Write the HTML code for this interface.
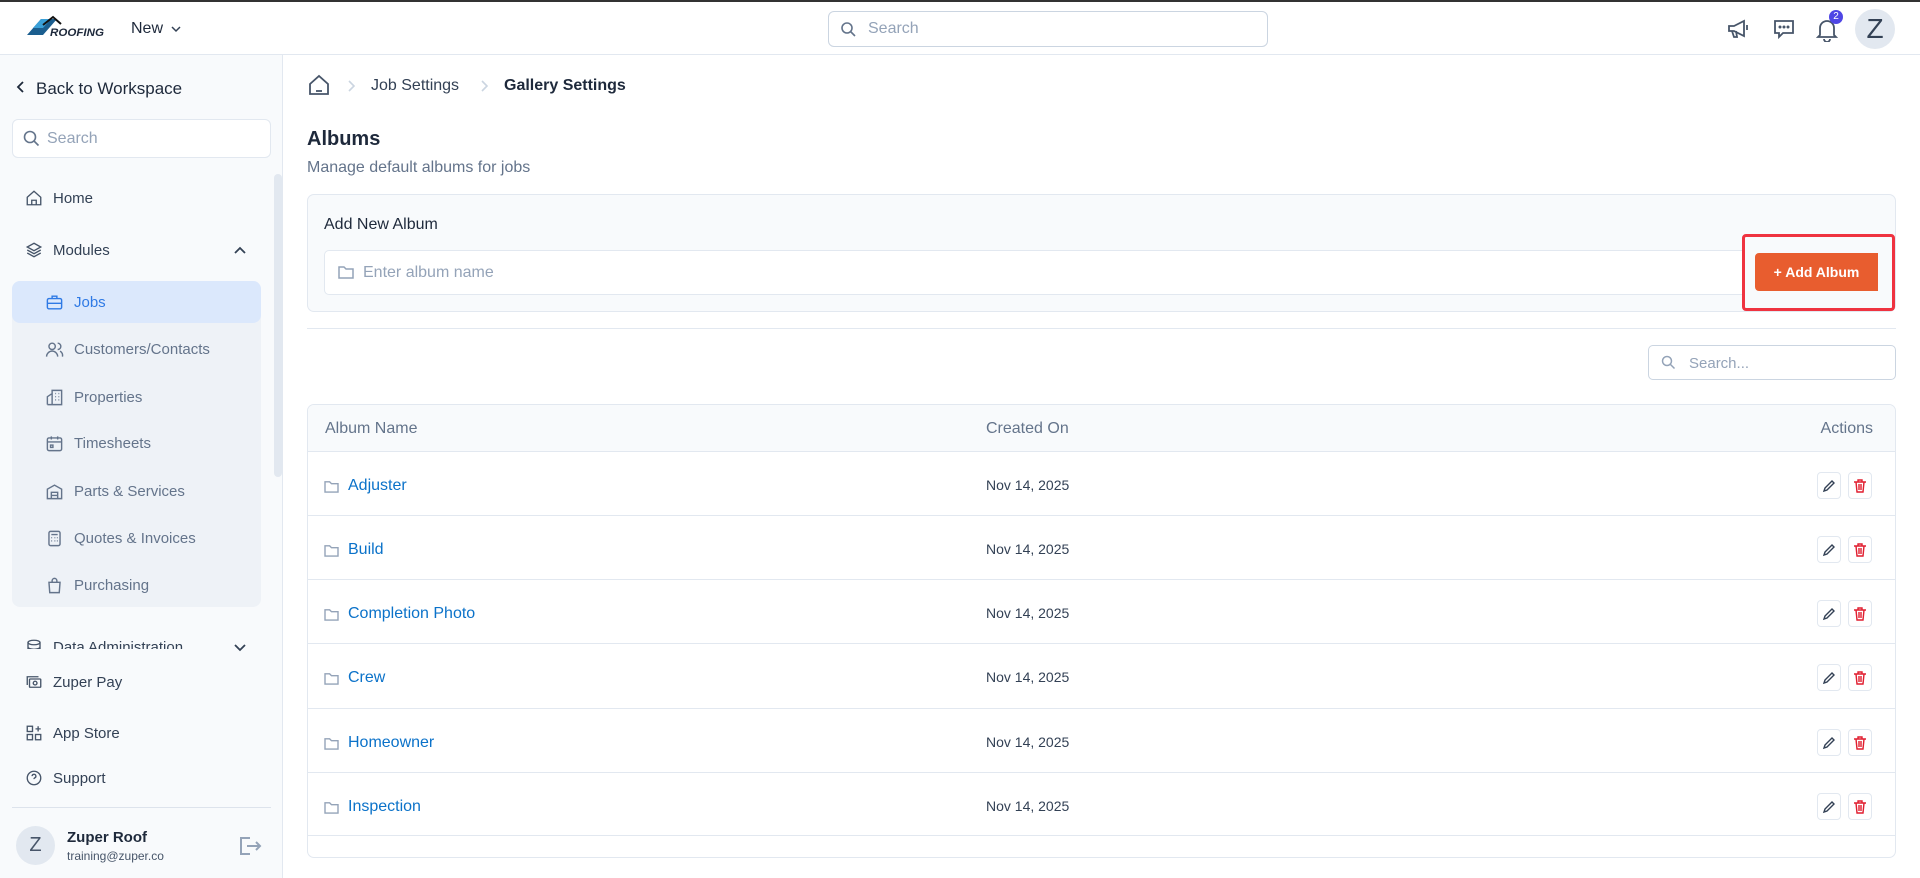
<!DOCTYPE html>
<html><head><meta charset="utf-8"><style>
*{box-sizing:border-box;margin:0;padding:0}
body{width:1920px;height:878px;overflow:hidden;background:#fff;font-family:"Liberation Sans",sans-serif;color:#1e293b;position:relative}
.a{position:absolute}
.top{left:0;top:0;width:1920px;height:55px;border-top:2px solid #333;border-bottom:1px solid #e2e8f0;background:#fff}
.side{left:0;top:55px;width:283px;height:823px;background:#f8fafc;border-right:1px solid #e2e8f0}
.mi{position:absolute;left:25px;font-size:15px;color:#334155;display:flex;align-items:center;gap:10px}
.mi svg{width:18px;height:18px;stroke:#475569;fill:none;stroke-width:1.8}
.sub{position:absolute;left:45px;font-size:15px;color:#64748b;display:flex;align-items:center;gap:10px}
.sub svg{width:19px;height:19px;stroke:#64748b;fill:none;stroke-width:1.8}
.row{position:absolute;left:307px;width:1589px;height:64px;border-top:1px solid #e2e8f0}
.row .n{position:absolute;left:17px;top:25px;font-size:16px;color:#0b72c9;display:flex;align-items:center;gap:9px}
.row .d{position:absolute;left:679px;top:25px;font-size:14px;color:#334155}
.btn{position:absolute;top:20px;width:24px;height:27px;border:1px solid #e2e8f0;border-radius:4px;background:#fff;display:flex;align-items:center;justify-content:center}
</style></head><body>
<div class="a top">
 <svg class="a" style="left:27px;top:13px" width="78" height="22" viewBox="0 0 78 22"><polygon points="0,20 14,4 30,4 16,20" fill="#1b5e8f"/><polygon points="6,13 14,4 24,4 16,13" fill="#3aa0d8"/><polyline points="16,10 26,2 34,9" stroke="#111" stroke-width="2" fill="none"/><text x="23" y="21" font-size="11" font-style="italic" font-weight="bold" fill="#1e293b" font-family="Liberation Sans" textLength="54" lengthAdjust="spacingAndGlyphs">ROOFING</text></svg>
 <div class="a" style="left:131px;top:18px;font-size:16px;color:#1e293b">New</div>
 <svg class="a" style="left:171px;top:23px" width="10" height="8"><path d="M1 2l4 4 4-4" stroke="#334155" fill="none" stroke-width="1.5"/></svg>
 <div class="a" style="left:828px;top:9px;width:440px;height:36px;border:1px solid #cbd5e1;border-radius:6px"></div>
 <svg class="a" style="left:840px;top:19px" width="16" height="16"><circle cx="7" cy="7" r="5" stroke="#64748b" stroke-width="1.6" fill="none"/><path d="M11 11l4 4" stroke="#64748b" stroke-width="1.6"/></svg>
 <div class="a" style="left:868px;top:18px;font-size:16px;color:#94a3b8">Search</div>
 <svg class="a" style="left:1726px;top:16px" width="24" height="22" viewBox="0 0 24 22" fill="none" stroke="#475569" stroke-width="1.8"><path d="M3 8h5l10-5v15L8 13H3z"/><path d="M6 13l2 6h3l-1-6"/><path d="M21 7v5"/></svg>
 <svg class="a" style="left:1772px;top:15px" width="24" height="24" viewBox="0 0 24 24" fill="none" stroke="#475569" stroke-width="1.8"><path d="M3 4h18v12H11l-4 4v-4H3z"/><circle cx="8" cy="10" r=".6" fill="#475569"/><circle cx="12" cy="10" r=".6" fill="#475569"/><circle cx="16" cy="10" r=".6" fill="#475569"/></svg>
 <svg class="a" style="left:1816px;top:16px" width="22" height="24" viewBox="0 0 22 24" fill="none" stroke="#475569" stroke-width="1.8"><path d="M4 17V10a7 7 0 0 1 14 0v7l2 2H2z"/><path d="M8 21a3 3 0 0 0 6 0"/></svg>
 <div class="a" style="left:1829px;top:8px;width:14px;height:14px;border-radius:50%;background:#4f46e5;color:#fff;font-size:10px;text-align:center;line-height:14px">2</div>
 <div class="a" style="left:1855px;top:7px;width:40px;height:40px;border-radius:50%;background:#e2e8f0;color:#334155;font-size:28px;text-align:center;line-height:40px">Z</div>
</div>

<div class="a side">
 <svg class="a" style="left:16px;top:26px" width="10" height="12"><path d="M7 1L2 6l5 5" stroke="#1e293b" stroke-width="1.8" fill="none"/></svg>
 <div class="a" style="left:36px;top:24px;font-size:17px;color:#1e293b">Back to Workspace</div>
 <div class="a" style="left:12px;top:64px;width:259px;height:39px;background:#fff;border:1px solid #e2e8f0;border-radius:6px"></div>
 <svg class="a" style="left:23px;top:75px" width="17" height="17"><circle cx="7" cy="7" r="5.5" stroke="#64748b" stroke-width="1.6" fill="none"/><path d="M11 11l4.5 4.5" stroke="#64748b" stroke-width="1.6"/></svg>
 <div class="a" style="left:47px;top:75px;font-size:16px;color:#94a3b8">Search</div>
 <div class="a" style="left:274px;top:119px;width:8px;height:303px;background:#e2e8f0;border-radius:4px"></div>
 <div class="mi" style="top:134px"><svg viewBox="0 0 24 24"><path d="M3 11l9-8 9 8v10H3z"/><path d="M9 21v-6h6v6"/></svg>Home</div>
 <div class="mi" style="top:186px"><svg viewBox="0 0 24 24"><path d="M12 3l9 5-9 5-9-5z"/><path d="M3 12l9 5 9-5"/><path d="M3 16l9 5 9-5"/></svg>Modules</div>
 <svg class="a" style="left:233px;top:190px" width="14" height="10"><path d="M2 8l5-5 5 5" stroke="#334155" stroke-width="1.8" fill="none"/></svg>
 <div class="a" style="left:12px;top:226px;width:249px;height:326px;background:#eef2f7;border-radius:8px"></div>
 <div class="a" style="left:12px;top:226px;width:249px;height:42px;background:#dbe8fc;border-radius:8px"></div>
 <div class="sub" style="top:238px;color:#2f7ae5"><svg viewBox="0 0 24 24" style="stroke:#2f7ae5"><rect x="3" y="7" width="18" height="13" rx="2"/><path d="M9 7V4h6v3M3 13h18"/></svg>Jobs</div>
 <div class="sub" style="top:285px"><svg viewBox="0 0 24 24"><circle cx="9" cy="8" r="4"/><path d="M2 21a7 7 0 0 1 14 0M16 4a4 4 0 0 1 0 8M19 14a6 6 0 0 1 3 7"/></svg>Customers/Contacts</div>
 <div class="sub" style="top:333px"><svg viewBox="0 0 24 24"><path d="M3 21V11l6-4v14M9 21V3h12v18zM3 21h18M13 7h1M17 7h1M13 11h1M17 11h1M13 15h1M17 15h1"/></svg>Properties</div>
 <div class="sub" style="top:379px"><svg viewBox="0 0 24 24"><rect x="3" y="5" width="18" height="16" rx="2"/><path d="M3 10h18M8 3v4M16 3v4M7 14h3v3H7z"/></svg>Timesheets</div>
 <div class="sub" style="top:427px"><svg viewBox="0 0 24 24"><path d="M3 21V9l9-5 9 5v12zM8 21v-8h8v8M8 17h8"/></svg>Parts &amp; Services</div>
 <div class="sub" style="top:474px"><svg viewBox="0 0 24 24"><rect x="5" y="3" width="14" height="18" rx="2"/><path d="M8 7h8M8 11h1M12 11h1M15 11h1M8 15h1M12 15h1M15 15h1"/></svg>Quotes &amp; Invoices</div>
 <div class="sub" style="top:521px"><svg viewBox="0 0 24 24"><path d="M5 8h14l-1 13H6zM9 8V6a3 3 0 0 1 6 0v2"/></svg>Purchasing</div>
 <div style="position:absolute;left:0;top:580px;width:283px;height:14px;overflow:hidden"><div class="mi" style="top:3px"><svg viewBox="0 0 24 24"><ellipse cx="12" cy="6" rx="8" ry="3"/><path d="M4 6v12c0 2 4 3 8 3s8-1 8-3V6M4 12c0 2 4 3 8 3s8-1 8-3"/></svg>Data Administration</div></div>
 <svg class="a" style="left:233px;top:588px" width="14" height="10"><path d="M2 2l5 5 5-5" stroke="#334155" stroke-width="1.8" fill="none"/></svg>
 <div class="mi" style="top:618px"><svg viewBox="0 0 24 24"><rect x="6" y="8" width="15" height="11" rx="1"/><path d="M3 16V5h15"/><circle cx="13.5" cy="13.5" r="2.5"/></svg>Zuper Pay</div>
 <div class="mi" style="top:669px"><svg viewBox="0 0 24 24"><rect x="3" y="3" width="7" height="7"/><rect x="3" y="14" width="7" height="7"/><rect x="14" y="14" width="7" height="7"/><path d="M17.5 3v7M14 6.5h7"/></svg>App Store</div>
 <div class="mi" style="top:714px"><svg viewBox="0 0 24 24"><circle cx="12" cy="12" r="9"/><path d="M9.5 9.5a2.5 2.5 0 1 1 3.5 2.3c-.7.4-1 1-1 1.7M12 17h.01"/></svg>Support</div>
 <div class="a" style="left:12px;top:752px;width:259px;height:1px;background:#dde3ec"></div>
 <div class="a" style="left:16px;top:771px;width:39px;height:39px;border-radius:50%;background:#e2e8f0;color:#475569;font-size:20px;text-align:center;line-height:39px">Z</div>
 <div class="a" style="left:67px;top:774px;font-size:15px;font-weight:bold;color:#1e293b">Zuper Roof</div>
 <div class="a" style="left:67px;top:794px;font-size:12px;color:#475569">training@zuper.co</div>
 <svg class="a" style="left:238px;top:780px" width="24" height="22" viewBox="0 0 24 22" fill="none" stroke="#94a3b8" stroke-width="2"><path d="M12 3H3v16h9M9 11h13M18 7l4 4-4 4"/></svg>
</div>

<svg class="a" style="left:308px;top:74px" width="22" height="22" viewBox="0 0 22 22" fill="none" stroke="#475569" stroke-width="1.8"><path d="M2 10l9-8 9 8v10H2z"/><path d="M8 17h6"/></svg>
<svg class="a" style="left:347px;top:80px" width="8" height="12"><path d="M2 1l5 5-5 5" stroke="#cbd5e1" stroke-width="1.6" fill="none"/></svg>
<div class="a" style="left:371px;top:77px;font-size:16px;color:#334155">Job Settings</div>
<svg class="a" style="left:480px;top:80px" width="8" height="12"><path d="M2 1l5 5-5 5" stroke="#cbd5e1" stroke-width="1.6" fill="none"/></svg>
<div class="a" style="left:504px;top:77px;font-size:16px;font-weight:bold;color:#1e293b">Gallery Settings</div>
<div class="a" style="left:307px;top:128px;font-size:20px;font-weight:bold;color:#1e293b">Albums</div>
<div class="a" style="left:307px;top:159px;font-size:16px;color:#64748b">Manage default albums for jobs</div>

<div class="a" style="left:307px;top:194px;width:1589px;height:118px;background:#f8fafc;border:1px solid #e2e8f0;border-radius:7px"></div>
<div class="a" style="left:324px;top:216px;font-size:16px;color:#1e293b">Add New Album</div>
<div class="a" style="left:324px;top:250px;width:1440px;height:45px;background:#fff;border:1px solid #e2e8f0;border-radius:5px"></div>
<svg class="a" style="left:338px;top:265px" width="16" height="14" viewBox="0 0 16 14" fill="none" stroke="#94a3b8" stroke-width="1.5"><path d="M1 2h5l2 2h7v9H1z"/></svg>
<div class="a" style="left:363px;top:264px;font-size:16px;color:#94a3b8">Enter album name</div>
<div class="a" style="left:1742px;top:234px;width:153px;height:77px;border:3px solid #ef3340;border-radius:4px;background:#f8fafc"></div>
<div class="a" style="left:1755px;top:253px;width:123px;height:38px;background:#e85d2f;border-radius:4px 0 0 4px;color:#fff;font-size:14px;font-weight:bold;text-align:center;line-height:38px">+ Add Album</div>

<div class="a" style="left:307px;top:328px;width:1589px;height:1px;background:#e2e8f0"></div>
<div class="a" style="left:1648px;top:345px;width:248px;height:35px;border:1px solid #cbd5e1;border-radius:5px"></div>
<svg class="a" style="left:1661px;top:355px" width="15" height="15"><circle cx="6" cy="6" r="4.5" stroke="#94a3b8" stroke-width="1.5" fill="none"/><path d="M9.5 9.5l4 4" stroke="#94a3b8" stroke-width="1.5"/></svg>
<div class="a" style="left:1689px;top:355px;font-size:15px;color:#94a3b8">Search...</div>

<div class="a" style="left:307px;top:404px;width:1589px;height:454px;border:1px solid #e2e8f0;border-radius:7px;overflow:hidden">
 <div style="height:47px;background:#f8fafc;position:relative;font-size:16px;color:#64748b">
  <div class="a" style="left:17px;top:15px">Album Name</div>
  <div class="a" style="left:678px;top:15px">Created On</div>
  <div class="a" style="right:22px;top:15px">Actions</div>
 </div>
</div>
<div class="row" style="top:451px"><div class="n"><svg width="15" height="13" viewBox="0 0 16 14" fill="none" stroke="#94a3b8" stroke-width="1.5"><path d="M1 2h5l2 2h7v9H1z"/></svg>Adjuster</div><div class="d">Nov 14, 2025</div><div class="btn" style="left:1510px"><svg width="14" height="14" viewBox="0 0 14 14" fill="none" stroke="#334155" stroke-width="1.4"><path d="M2 12l1-3 7-7 2 2-7 7z"/></svg></div><div class="btn" style="left:1541px"><svg width="14" height="14" viewBox="0 0 14 14" fill="none" stroke="#e11d2e" stroke-width="1.4"><path d="M1 3h12M5 3V1h4v2M3 3l1 10h6l1-10M6 5v6M8 5v6"/></svg></div></div>
<div class="row" style="top:515px"><div class="n"><svg width="15" height="13" viewBox="0 0 16 14" fill="none" stroke="#94a3b8" stroke-width="1.5"><path d="M1 2h5l2 2h7v9H1z"/></svg>Build</div><div class="d">Nov 14, 2025</div><div class="btn" style="left:1510px"><svg width="14" height="14" viewBox="0 0 14 14" fill="none" stroke="#334155" stroke-width="1.4"><path d="M2 12l1-3 7-7 2 2-7 7z"/></svg></div><div class="btn" style="left:1541px"><svg width="14" height="14" viewBox="0 0 14 14" fill="none" stroke="#e11d2e" stroke-width="1.4"><path d="M1 3h12M5 3V1h4v2M3 3l1 10h6l1-10M6 5v6M8 5v6"/></svg></div></div>
<div class="row" style="top:579px"><div class="n"><svg width="15" height="13" viewBox="0 0 16 14" fill="none" stroke="#94a3b8" stroke-width="1.5"><path d="M1 2h5l2 2h7v9H1z"/></svg>Completion Photo</div><div class="d">Nov 14, 2025</div><div class="btn" style="left:1510px"><svg width="14" height="14" viewBox="0 0 14 14" fill="none" stroke="#334155" stroke-width="1.4"><path d="M2 12l1-3 7-7 2 2-7 7z"/></svg></div><div class="btn" style="left:1541px"><svg width="14" height="14" viewBox="0 0 14 14" fill="none" stroke="#e11d2e" stroke-width="1.4"><path d="M1 3h12M5 3V1h4v2M3 3l1 10h6l1-10M6 5v6M8 5v6"/></svg></div></div>
<div class="row" style="top:643px"><div class="n"><svg width="15" height="13" viewBox="0 0 16 14" fill="none" stroke="#94a3b8" stroke-width="1.5"><path d="M1 2h5l2 2h7v9H1z"/></svg>Crew</div><div class="d">Nov 14, 2025</div><div class="btn" style="left:1510px"><svg width="14" height="14" viewBox="0 0 14 14" fill="none" stroke="#334155" stroke-width="1.4"><path d="M2 12l1-3 7-7 2 2-7 7z"/></svg></div><div class="btn" style="left:1541px"><svg width="14" height="14" viewBox="0 0 14 14" fill="none" stroke="#e11d2e" stroke-width="1.4"><path d="M1 3h12M5 3V1h4v2M3 3l1 10h6l1-10M6 5v6M8 5v6"/></svg></div></div>
<div class="row" style="top:708px"><div class="n"><svg width="15" height="13" viewBox="0 0 16 14" fill="none" stroke="#94a3b8" stroke-width="1.5"><path d="M1 2h5l2 2h7v9H1z"/></svg>Homeowner</div><div class="d">Nov 14, 2025</div><div class="btn" style="left:1510px"><svg width="14" height="14" viewBox="0 0 14 14" fill="none" stroke="#334155" stroke-width="1.4"><path d="M2 12l1-3 7-7 2 2-7 7z"/></svg></div><div class="btn" style="left:1541px"><svg width="14" height="14" viewBox="0 0 14 14" fill="none" stroke="#e11d2e" stroke-width="1.4"><path d="M1 3h12M5 3V1h4v2M3 3l1 10h6l1-10M6 5v6M8 5v6"/></svg></div></div>
<div class="row" style="top:772px;border-bottom:1px solid #e2e8f0"><div class="n"><svg width="15" height="13" viewBox="0 0 16 14" fill="none" stroke="#94a3b8" stroke-width="1.5"><path d="M1 2h5l2 2h7v9H1z"/></svg>Inspection</div><div class="d">Nov 14, 2025</div><div class="btn" style="left:1510px"><svg width="14" height="14" viewBox="0 0 14 14" fill="none" stroke="#334155" stroke-width="1.4"><path d="M2 12l1-3 7-7 2 2-7 7z"/></svg></div><div class="btn" style="left:1541px"><svg width="14" height="14" viewBox="0 0 14 14" fill="none" stroke="#e11d2e" stroke-width="1.4"><path d="M1 3h12M5 3V1h4v2M3 3l1 10h6l1-10M6 5v6M8 5v6"/></svg></div></div>
</body></html>
